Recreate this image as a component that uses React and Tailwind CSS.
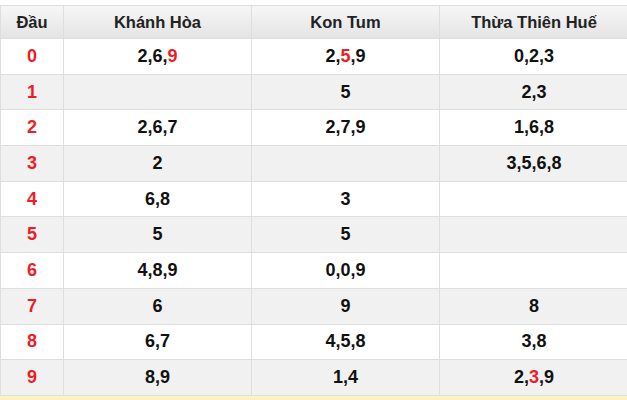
import React from "react";

const heads = ["Khánh Hòa", "Kon Tum", "Thừa Thiên Huế"];

// each cell: [before, red, after]
const rows = [
  [["2,6,", "9"], ["2,", "5", ",9"], ["0,2,3"]],
  [[""], ["5"], ["2,3"]],
  [["2,6,7"], ["2,7,9"], ["1,6,8"]],
  [["2"], [""], ["3,5,6,8"]],
  [["6,8"], ["3"], [""]],
  [["5"], ["5"], [""]],
  [["4,8,9"], ["0,0,9"], [""]],
  [["6"], ["9"], ["8"]],
  [["6,7"], ["4,5,8"], ["3,8"]],
  [["8,9"], ["1,4"], ["2,", "3", ",9"]],
];

const Cell = ({ parts }) => (
  <td className="border border-[#dedede] text-center align-middle text-[18px] font-bold text-[#111]">
    {parts.map((p, i) =>
      i === 1 ? (
        <span key={i} className="text-[#ee1c25]">
          {p}
        </span>
      ) : (
        <span key={i}>{p}</span>
      )
    )}
  </td>
);

export default function App() {
  return (
    <div
      className="w-[627px] h-[400px] overflow-hidden bg-white pt-[5px]"
      style={{ fontFamily: '"Liberation Sans", Arial, sans-serif' }}
    >
      <table className="w-[628px] border-collapse table-fixed">
        <colgroup>
          <col className="w-[63px]" />
          <col className="w-[188px]" />
          <col className="w-[188px]" />
          <col className="w-[189px]" />
        </colgroup>
        <thead>
          <tr className="h-[33px] bg-gradient-to-b from-[#f6f6f6] to-[#e4e4e4]">
            <th className="border border-[#dedede] text-[16.5px] font-bold text-[#222]">Đầu</th>
            {heads.map((h) => (
              <th key={h} className="border border-[#dedede] text-[16.5px] font-bold text-[#222]">
                {h}
              </th>
            ))}
          </tr>
        </thead>
        <tbody>
          {rows.map((r, i) => (
            <tr key={i} className={`h-[35.7px] ${i % 2 === 1 ? "bg-[#f1f1f1]" : "bg-white"}`}>
              <td className="border border-[#dedede] text-center text-[18px] font-bold text-[#ee1c25]">
                {i}
              </td>
              {r.map((c, j) => (
                <Cell key={j} parts={c} />
              ))}
            </tr>
          ))}
        </tbody>
      </table>
      <div className="h-[10px] bg-[#fff2c2]" />
    </div>
  );
}
